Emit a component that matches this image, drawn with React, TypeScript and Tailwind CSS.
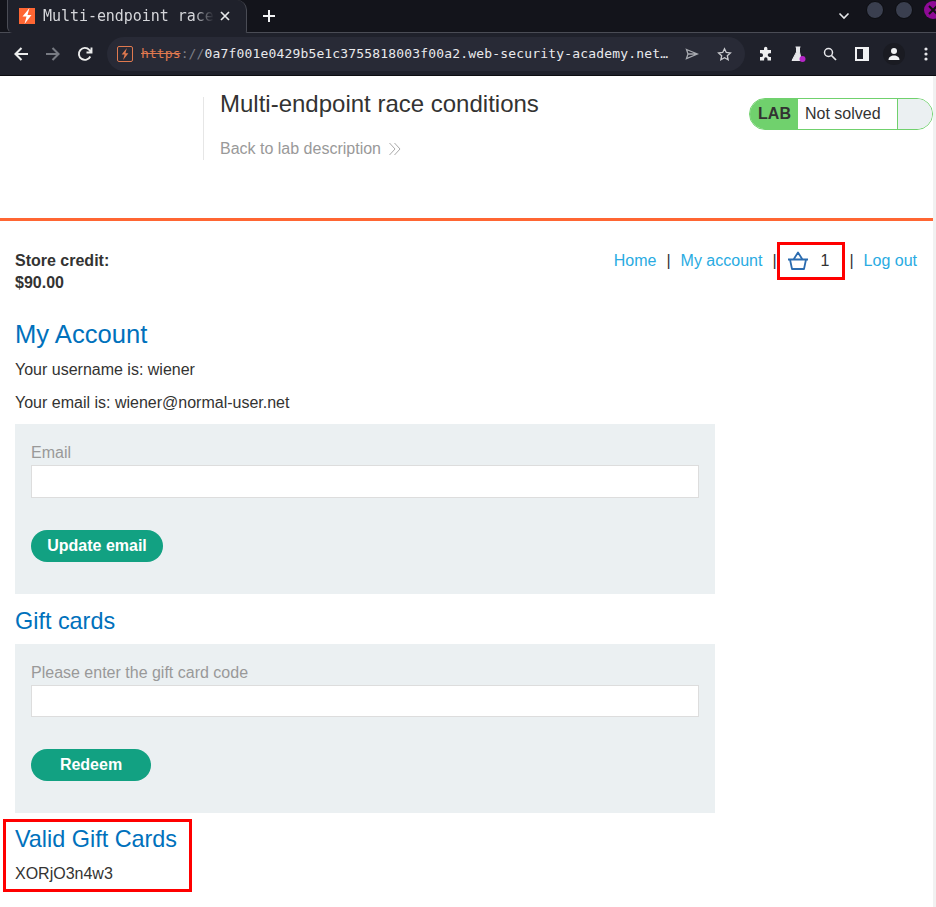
import React from "react";

const Logo = ({ className }: { className?: string }) => (
  <svg viewBox="0 0 16 16" className={className}>
    <path d="M10.500 0 3.500 8.500h4L5.500 16l7-9h-4L10.500 0z" fill="currentColor" />
  </svg>
);

const Chrome = () => (
  <div className="bg-[#1f212b] text-[#e6e7ea] [font-family:'DejaVu_Sans_Mono',monospace]">
    <div className="h-[33px] bg-[#13141b] border-b border-[#4a4c55] flex items-start relative">
      <div className="ml-[7px] h-[33px] w-[240px] bg-[#1f212b] border border-t-0 border-[#4a4c55] border-b-[#1f212b] rounded-tr-[10px] rounded-br-[2px] rounded-bl-[6px] flex items-center pl-[11px]">
        <div className="w-4 h-4 bg-[#ff6633] text-white flex items-center justify-center shrink-0">
          <Logo className="w-4 h-4" />
        </div>
        <div className="ml-[8px] w-[171px] overflow-hidden whitespace-nowrap text-[15px] leading-none tracking-[-0.05px] text-[#d5d6da] [mask-image:linear-gradient(to_right,black_88%,transparent_100%)]">Multi-endpoint race</div>
        <svg viewBox="0 0 12 12" className="w-3 h-3 ml-[5px]"><path d="M2 2l8 8M10 2l-8 8" stroke="#e6e7ea" strokeWidth="1.700" /></svg>
      </div>
      <svg viewBox="0 0 14 14" className="w-[14px] h-[14px] ml-[15px] mt-[9px]"><path d="M7 1v12M1 7h12" stroke="#f2f3f5" strokeWidth="2" /></svg>
      <svg viewBox="0 0 12 8" className="absolute left-[838px] top-[12px] w-3 h-2"><path d="M1.500 1.500 6 6l4.500-4.500" stroke="#e6e7ea" strokeWidth="1.600" fill="none" /></svg>
      <div className="absolute left-[866px] top-[1px] w-[18px] h-[18px] rounded-full bg-[#3a3f4f] border border-[#0c0d11]" />
      <div className="absolute left-[895px] top-[1px] w-[18px] h-[18px] rounded-full bg-[#3a3f4f] border border-[#0c0d11]" />
      <div className="absolute left-[924px] top-[1px] w-[18px] h-[18px] rounded-full bg-[#8e0a96] flex items-center justify-center text-black">
        <svg viewBox="0 0 12 12" className="w-3 h-3"><path d="M2 2l8 8M10 2l-8 8" stroke="#111" strokeWidth="2" /></svg>
      </div>
    </div>
    <div className="h-[43px] border-b border-[#0c0d11] flex items-center relative">
      <svg viewBox="0 0 16 16" className="w-4 h-4 ml-[13px]"><path d="M15 8H2.500M8.500 2 2.500 8l6 6" stroke="#eceded" strokeWidth="2.100" fill="none" /></svg>
      <svg viewBox="0 0 16 16" className="w-4 h-4 ml-[16px]"><path d="M1 8H13.500M7.500 2l6 6-6 6" stroke="#777a82" strokeWidth="2.100" fill="none" /></svg>
      <svg viewBox="0 0 16 16" className="w-4 h-4 ml-[16px]"><path d="M13.300 10.500A6 6 0 1 1 12.300 3.800L14 5.500M14.500 1.500v5h-5" stroke="#eceded" strokeWidth="1.900" fill="none" /></svg>
      <div className="ml-[14px] w-[638px] h-[34px] rounded-full bg-[#282a36] flex items-center pl-[10px] text-[13px]">
        <div className="w-4 h-4 border border-[#e0794f] rounded-[2px] text-[#e0794f] flex items-center justify-center shrink-0"><Logo className="w-3 h-3" /></div>
        <span className="ml-[8px] line-through text-[#e0794f] tracking-[0.1px]">https</span>
        <span className="text-[#7d7f87] tracking-[0.1px]">://</span>
        <span className="text-[#e8e9ec] whitespace-nowrap tracking-[0.17px]">0a7f001e0429b5e1c3755818003f00a2.web-security-academy.net…</span>
        <svg viewBox="0 0 14 14" className="w-[14px] h-[14px] ml-[17px] shrink-0"><path d="M1.500 2.500 12.500 7l-11 4.500 1.500-4.500zM3 7h9" stroke="#a9abb1" strokeWidth="1.300" fill="none" /></svg>
        <svg viewBox="0 0 16 16" className="w-[15px] h-[15px] ml-[18px] shrink-0"><path d="m8 1.800 1.900 4 4.400.5-3.300 3 .9 4.400L8 11.500l-3.900 2.200.9-4.400-3.300-3 4.400-.5z" stroke="#c9cace" strokeWidth="1.400" fill="none" /></svg>
      </div>
      <svg viewBox="0 0 16 16" className="absolute left-[758px] top-[13px] w-4 h-4"><path d="M6 2.500a1.700 1.700 0 0 1 3.400 0V4H13v3.300h-1.500a1.800 1.800 0 0 0 0 3.600H13V14.500H9.500V13a1.700 1.700 0 0 0-3.400 0v1.500H2V11h1.200a1.800 1.800 0 0 0 0-3.700H2V4h4z" fill="#eeeff1" /></svg>
      <svg viewBox="0 0 16 16" className="absolute left-[790px] top-[13px] w-4 h-4"><path d="M5.500 1h5M6.500 1v5L2 14.500h9.500L9.500 6V1" fill="#e6e7ea" stroke="#e6e7ea" /><circle cx="12.500" cy="13" r="3" fill="#b526c8" /></svg>
      <svg viewBox="0 0 14 14" className="absolute left-[823px] top-[14px] w-[14px] h-[14px]"><circle cx="5.500" cy="5.500" r="4" stroke="#e6e7ea" strokeWidth="1.500" fill="none" /><path d="m8.500 8.500 4.500 4.500" stroke="#e6e7ea" strokeWidth="1.700" /></svg>
      <div className="absolute left-[855px] top-[14px] w-[14px] h-[14px] border-2 border-r-[6px] border-[#f0f1f3]" />
      <div className="absolute left-[883px] top-[10px] w-[22px] h-[22px] rounded-full bg-[#1a1b22] flex items-center justify-center">
        <svg viewBox="0 0 14 14" className="w-[14px] h-[14px]"><circle cx="7" cy="4" r="3" fill="#f0f1f3" /><path d="M1.500 13c0-3 2.500-4.500 5.500-4.500s5.500 1.500 5.500 4.500z" fill="#f0f1f3" /></svg>
      </div>
      <svg viewBox="0 0 4 14" className="absolute left-[924px] top-[14px] w-1 h-[14px]"><circle cx="2" cy="2" r="1.600" fill="#e6e7ea" /><circle cx="2" cy="7" r="1.600" fill="#e6e7ea" /><circle cx="2" cy="12" r="1.600" fill="#e6e7ea" /></svg>
    </div>
  </div>
);

const Field = ({ label }: { label: string }) => (
  <div>
    <label className="block text-[16px] leading-[18px] text-[#999999]">{label}</label>
  </div>
);

export default function App() {
  return (
    <div className="w-[936px] h-[907px] overflow-hidden bg-white relative text-[#333332] [font-family:'Liberation_Sans',Arial,sans-serif] text-[16px]">
      <Chrome />
      <div className="w-[933px] h-[831px] relative">
        <header className="h-[145px] border-b-[3px] border-[#ff6633] flex">
          <div className="ml-[203px] mt-[21px] h-[63px] border-l border-[#e6e6e6] pl-[16px]">
            <h2 className="text-[24px] leading-[29px] -mt-[8px]">Multi-endpoint race conditions</h2>
            <a className="mt-[22px] flex items-center text-[#999999] leading-[18px]">
              Back to lab description
              <svg viewBox="0 0 14 14" className="w-[14px] h-[14px] ml-[7px]"><path d="M1.500 1 7 7l-5.500 6M6.500 1 12 7l-5.500 6" stroke="#aaaaaa" strokeWidth="1" fill="none" /></svg>
            </a>
          </div>
          <div className="ml-auto mt-[22px] w-[184px] h-[32px] rounded-full border border-[#70d16d] flex overflow-hidden">
            <div className="w-[48px] bg-[#70d16d] font-bold flex items-center justify-center pl-[1px]">LAB</div>
            <div className="w-[99px] flex items-center pl-[7px]">Not solved</div>
            <div className="flex-1 bg-[#ebf0f2] border-l border-[#70d16d]" />
          </div>
        </header>
        <main className="px-[15px]">
          <div className="flex justify-between pt-[29px]">
            <div className="font-bold leading-[22px]">
              <div>Store credit:</div>
              <div>$90.00</div>
            </div>
            <nav className="flex items-start leading-[22px] pr-[1px] whitespace-nowrap">
              <a className="text-[#29abe2]">Home</a>
              <span className="ml-[10px]">|</span>
              <a className="ml-[10px] text-[#29abe2]">My account</a>
              <span className="ml-[10px]">|</span>
              <svg viewBox="0 0 22 20" className="ml-[10px] mt-[1px] w-[22px] h-[20px]"><path d="M1 8.500h20M3 8.500l2 9.500h12l2-9.500M6.500 8.500 11 1.500l4.500 7" stroke="#2b6cb0" strokeWidth="1.800" fill="none" strokeLinejoin="round" /></svg>
              <span className="ml-[11px] pl-[1px]">1</span>
              <span className="ml-[20px]">|</span>
              <a className="ml-[10px] text-[#29abe2]">Log out</a>
            </nav>
          </div>
          <h1 className="mt-[24px] text-[25.6px] leading-[32px] text-[#0071bc]">My Account</h1>
          <p className="mt-[11px] leading-[18px]">Your username is: wiener</p>
          <p className="mt-[15px] leading-[18px]">Your email is: wiener@normal-user.net</p>
          <section className="mt-[12px] w-[700px] h-[170px] bg-[#ebf0f2] p-[16px] pt-[20px]">
            <Field label="Email" />
            <div className="mt-[3px] h-[33px] bg-white border border-[#dddddd]" />
            <button className="mt-[32px] h-[32px] w-[132px] rounded-full bg-[#12a182] text-white font-bold">Update email</button>
          </section>
          <h2 className="mt-[13px] text-[23.4px] leading-[29px] text-[#0071bc]">Gift cards</h2>
          <section className="mt-[8px] w-[700px] h-[169px] bg-[#ebf0f2] p-[16px] pt-[20px]">
            <Field label="Please enter the gift card code" />
            <div className="mt-[3px] h-[32px] bg-white border border-[#dddddd]" />
            <button className="mt-[32px] h-[32px] w-[120px] rounded-full bg-[#12a182] text-white font-bold">Redeem</button>
          </section>
          <h2 className="mt-[12px] text-[23.4px] leading-[29px] text-[#0071bc]">Valid Gift Cards</h2>
          <p className="mt-[11px] leading-[18px]">XORjO3n4w3</p>
        </main>
      </div>
      <div className="absolute left-[933px] top-[76px] w-[3px] h-[831px] bg-[#f1f1f1]" />
      <div className="absolute left-[777px] top-[242px] w-[68px] h-[38px] border-[3px] border-[#ff0000]" />
      <div className="absolute left-[3px] top-[819px] w-[189px] h-[73px] border-[3px] border-[#ff0000]" />
    </div>
  );
}
